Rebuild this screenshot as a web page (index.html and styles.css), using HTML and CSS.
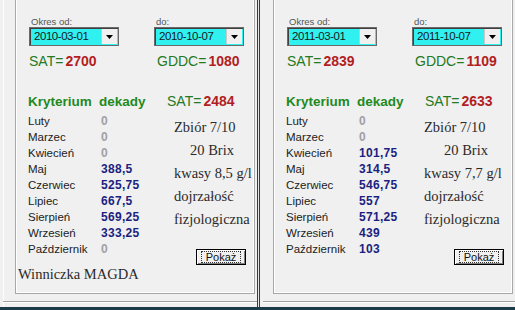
FILE: index.html
```html
<!DOCTYPE html>
<html lang="pl">
<head>
<meta charset="utf-8">
<title>SAT / GDDC</title>
<link rel="stylesheet" href="styles.css">
</head>
<body>
<div class="screen">
  <section class="panel panel-left">
    <div class="group">
      <div class="dates">
        <div class="field">
          <span class="lbl">Okres od:</span>
          <div class="combo"><span class="val">2010-03-01</span><span class="drop"><svg width="7" height="4" viewBox="0 0 7 4"><path d="M0 0H7L3.5 4Z" fill="#000"/></svg></span></div>
        </div>
        <div class="field">
          <span class="lbl">do:</span>
          <div class="combo"><span class="val">2010-10-07</span><span class="drop"><svg width="7" height="4" viewBox="0 0 7 4"><path d="M0 0H7L3.5 4Z" fill="#000"/></svg></span></div>
        </div>
      </div>
      <div class="sums">
        <span class="sum">SAT=<b>2700</b></span>
        <span class="sum">GDDC=<b>1080</b></span>
      </div>
      <div class="crit">
        <b class="crit-a">Kryterium</b><b class="crit-b">dekady</b>
        <span class="sum">SAT=<b>2484</b></span>
      </div>
      <div class="body">
        <div class="months">
          <span>Luty</span><b class="zero">0</b>
          <span>Marzec</span><b class="zero">0</b>
          <span>Kwiecień</span><b class="zero">0</b>
          <span>Maj</span><b>388,5</b>
          <span>Czerwiec</span><b>525,75</b>
          <span>Lipiec</span><b>667,5</b>
          <span>Sierpień</span><b>569,25</b>
          <span>Wrzesień</span><b>333,25</b>
          <span>Październik</span><b class="zero">0</b>
        </div>
        <div class="notes">
          <p>Zbiór 7/10</p>
          <p class="brix">20 Brix</p>
          <p>kwasy 8,5 g/l</p>
          <p>dojrzałość</p>
          <p>fizjologiczna</p>
          <button class="btn" type="button"><span>Pokaż</span></button>
        </div>
      </div>
      <div class="owner">Winniczka MAGDA</div>
    </div>
    <div class="baseline"></div>
  </section>
  <div class="divider"></div>
  <section class="panel panel-right">
    <div class="group">
      <div class="dates">
        <div class="field">
          <span class="lbl">Okres od:</span>
          <div class="combo"><span class="val">2011-03-01</span><span class="drop"><svg width="7" height="4" viewBox="0 0 7 4"><path d="M0 0H7L3.5 4Z" fill="#000"/></svg></span></div>
        </div>
        <div class="field">
          <span class="lbl">do:</span>
          <div class="combo"><span class="val">2011-10-07</span><span class="drop"><svg width="7" height="4" viewBox="0 0 7 4"><path d="M0 0H7L3.5 4Z" fill="#000"/></svg></span></div>
        </div>
      </div>
      <div class="sums">
        <span class="sum">SAT=<b>2839</b></span>
        <span class="sum">GDDC=<b>1109</b></span>
      </div>
      <div class="crit">
        <b class="crit-a">Kryterium</b><b class="crit-b">dekady</b>
        <span class="sum">SAT=<b>2633</b></span>
      </div>
      <div class="body">
        <div class="months">
          <span>Luty</span><b class="zero">0</b>
          <span>Marzec</span><b class="zero">0</b>
          <span>Kwiecień</span><b>101,75</b>
          <span>Maj</span><b>314,5</b>
          <span>Czerwiec</span><b>546,75</b>
          <span>Lipiec</span><b>557</b>
          <span>Sierpień</span><b>571,25</b>
          <span>Wrzesień</span><b>439</b>
          <span>Październik</span><b>103</b>
        </div>
        <div class="notes">
          <p>Zbiór 7/10</p>
          <p class="brix">20 Brix</p>
          <p>kwasy 7,7 g/l</p>
          <p>dojrzałość</p>
          <p>fizjologiczna</p>
          <button class="btn" type="button"><span>Pokaż</span></button>
        </div>
      </div>
    </div>
    <div class="baseline"></div>
  </section>
</div>
<div class="taskbar"></div>
</body>
</html>
```
FILE: styles.css
```css
* { box-sizing: border-box; }
html, body { margin: 0; padding: 0; }
body {
  width: 515px;
  height: 310px;
  overflow: hidden;
  background: #f0f0f0;
  font-family: "Liberation Sans", Arial, sans-serif;
  color: #222;
}
.screen {
  display: flex;
  height: 307px;
}
.panel {
  display: flex;
  flex-direction: column;
  height: 307px;
}
.panel-left {
  width: 257px;
  padding-left: 15px;
  --note-indent: 8px;
  --brix-indent: 16px;
  box-shadow: inset 3px 0 0 #f0f0f0, inset 4px 0 0 #fdfdfd;
}
.panel-right {
  width: 255px;
  padding-left: 13px;
  --note-indent: 0px;
  --brix-indent: 20px;
}
.divider {
  width: 3px;
  height: 307px;
  border-left: 1px solid #3a3a3a;
  border-right: 1px solid #3a3a3a;
  background: #e8e8e8;
}
.group {
  width: 240px;
  height: 294px;
  border: 1px solid #a8a8a8;
  border-top: none;
  box-shadow: inset 1px 0 0 #fff, inset -1px -1px 0 #fff;
  padding: 16px 0 0 12px;
  display: flex;
  flex-direction: column;
}
.baseline {
  margin: 7px 0 0 -12px;
  height: 2px;
  border-top: 1px solid #a0a0a0;
  border-bottom: 1px solid #fff;
}
.panel-right .baseline { margin-left: -10px; }
.taskbar {
  height: 3px;
  background: #1c3a48;
}

/* dates */
.dates {
  display: flex;
  gap: 35px;
  padding-left: 1px;
}
.field {
  display: flex;
  flex-direction: column;
  width: 90px;
}
.lbl {
  font-size: 9.5px;
  line-height: 11px;
  color: #555;
  padding-left: 2px;
  height: 11px;
}
.combo {
  display: flex;
  align-items: center;
  height: 19px;
  border: 1px solid #6a6a6a;
  box-shadow: inset 1px 1px 0 #404040;
  background: #30f0f0;
  padding: 1px 1px 1px 4px;
}
.val {
  flex: 1;
  font-size: 11.5px;
  letter-spacing: -0.45px;
  color: #1a1a1a;
  line-height: 15px;
}
.drop {
  width: 16px;
  height: 15px;
  background: #f0f0f0;
  border-left: 1px solid #c8c8c8;
  display: flex;
  align-items: center;
  justify-content: center;
}

/* sums */
.sums {
  display: grid;
  grid-template-columns: 128px auto;
  margin-top: 7px;
  height: 16px;
  padding-left: 1px;
}
.sum {
  font-size: 14px;
  line-height: 16px;
  color: #237a23;
  white-space: nowrap;
}
.sum b {
  color: #b21e1e;
  font-weight: bold;
  margin-left: 2px;
}

/* kryterium */
.crit {
  display: grid;
  grid-template-columns: 71px 68px auto;
  margin-top: 24px;
  height: 16px;
  align-items: baseline;
}
.crit-a, .crit-b {
  font-size: 13.5px;
  line-height: 16px;
  color: #1f8a1f;
}

/* body */
.body {
  display: flex;
  margin-top: 5px;
}
.months {
  display: grid;
  grid-template-columns: 73px 65px;
  grid-auto-rows: 16px;
  font-size: 11.5px;
  line-height: 16px;
  align-items: center;
  margin-top: -1px;
}
.months span { color: #222; }
.months b {
  font-size: 12px;
  color: #1b1f80;
  letter-spacing: 0.3px;
}
.months b.zero { color: #a0a0a0; }
.notes {
  display: flex;
  flex-direction: column;
  font-family: "Liberation Serif", "Times New Roman", serif;
  font-size: 14.5px;
  color: #2a2a2a;
  padding-top: 2px;
}
.notes p {
  margin: 0;
  line-height: 23px;
  padding-left: var(--note-indent);
  white-space: nowrap;
}
.notes p.brix { padding-left: calc(var(--note-indent) + var(--brix-indent)); }
.btn {
  margin: 18px 0 0 30px;
  width: 50px;
  height: 16px;
  padding: 1px;
  border: 1px solid #000;
  background: #f0f0f0;
  box-shadow: inset 1px 1px 0 #fff, inset -1px -1px 0 #808080;
  font-family: "Liberation Sans", Arial, sans-serif;
  font-size: 11px;
  line-height: 11px;
  color: #111;
  display: flex;
}
.btn span {
  flex: 1;
  border: 1px dotted #333;
  margin: 0 3px;
  line-height: 10px;
}
.owner {
  margin: 0 0 0 -10px;
  font-family: "Liberation Serif", "Times New Roman", serif;
  font-size: 14.5px;
  line-height: 18px;
  color: #2a2a2a;
}
```
